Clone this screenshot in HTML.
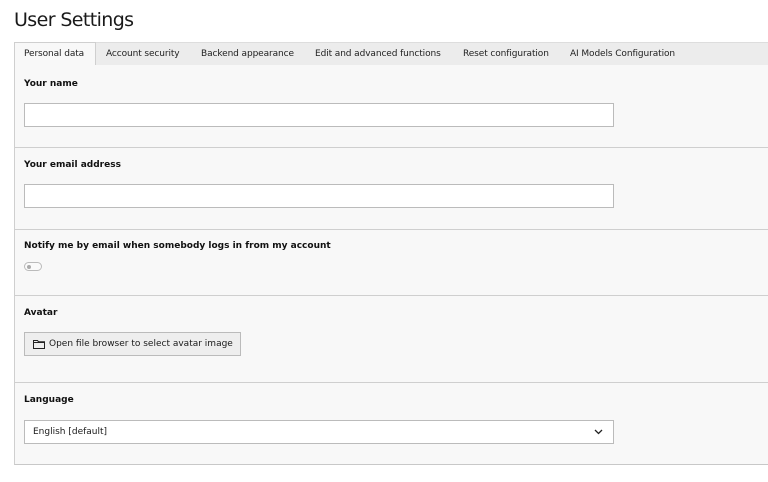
<!DOCTYPE html>
<html><head><meta charset="utf-8"><style>
*{margin:0;padding:0;box-sizing:border-box}
body{width:768px;height:482px;background:#fff;font-family:"DejaVu Sans","Liberation Sans",sans-serif;color:#1a1a1a;position:relative;overflow:hidden}
.a{position:absolute}
h1{position:absolute;left:14px;top:9px;font:400 19px "DejaVu Sans","Liberation Sans",sans-serif;letter-spacing:-0.6px;color:#1a1a1a}
.tabs{left:14px;top:42px;width:754px;height:24px;background:#ececec;border-top:1px solid #ddd;border-bottom:1px solid #c8c8c8}
.tab{position:absolute;top:6px;font-size:9px;letter-spacing:-0.1px;color:#222;white-space:nowrap}
.act{position:absolute;left:0;top:-1px;width:82px;height:25px;background:#f8f8f8;border:1px solid #cfcfcf;border-bottom:none}
.panel{left:14px;top:65px;width:754px;height:400px;background:#f8f8f8;border-left:1px solid #cfcfcf;border-bottom:1px solid #c8c8c8}
.sep{position:absolute;left:14px;width:754px;height:1px;background:#cfcfcf}
.lbl{position:absolute;left:24px;font-size:9px;font-weight:bold;color:#111;white-space:nowrap}
.inp{position:absolute;left:24px;width:590px;height:24px;background:#fff;border:1px solid #bbb}
</style></head><body>
<h1>User Settings</h1>
<div class="a tabs">
<div class="act"></div>
<span class="tab" style="left:10px">Personal data</span>
<span class="tab" style="left:92px">Account security</span>
<span class="tab" style="left:187px">Backend appearance</span>
<span class="tab" style="left:301px">Edit and advanced functions</span>
<span class="tab" style="left:449px">Reset configuration</span>
<span class="tab" style="left:556px">AI Models Configuration</span>
</div>
<div class="a panel"></div>
<div class="lbl" style="top:79px">Your name</div>
<div class="inp" style="top:103px"></div>
<div class="sep" style="top:147px"></div>
<div class="lbl" style="top:160px">Your email address</div>
<div class="inp" style="top:184px"></div>
<div class="sep" style="top:229px"></div>
<div class="lbl" style="top:241px">Notify me by email when somebody logs in from my account</div>
<div class="a" style="left:24px;top:262px;width:18px;height:9px;border:1px solid #bbb;border-radius:5px;background:#fafafa"><div class="a" style="left:2px;top:2px;width:4px;height:4px;border-radius:50%;background:#aaa"></div></div>
<div class="sep" style="top:295px"></div>
<div class="lbl" style="top:308px">Avatar</div>
<div class="a" style="left:24px;top:332px;width:217px;height:24px;background:#eee;border:1px solid #bbb;font-size:9px;padding:6px 0 0 24px;white-space:nowrap">Open file browser to select avatar image
<svg class="a" style="left:8px;top:6px" width="12" height="10" viewBox="0 0 12 10"><path d="M0.5 1.5h4l1 1.2h6v6.8h-11z M0.5 3.5h11" fill="none" stroke="#222" stroke-width="1"/></svg></div>
<div class="sep" style="top:382px"></div>
<div class="lbl" style="top:395px">Language</div>
<div class="inp" style="top:420px;font-size:9px;padding:6px 0 0 8px">English [default]
<svg class="a" style="left:569px;top:8px" width="9" height="6" viewBox="0 0 9 6"><path d="M1 1l3.5 3.5L8 1" fill="none" stroke="#222" stroke-width="1.3"/></svg></div>
</body></html>
